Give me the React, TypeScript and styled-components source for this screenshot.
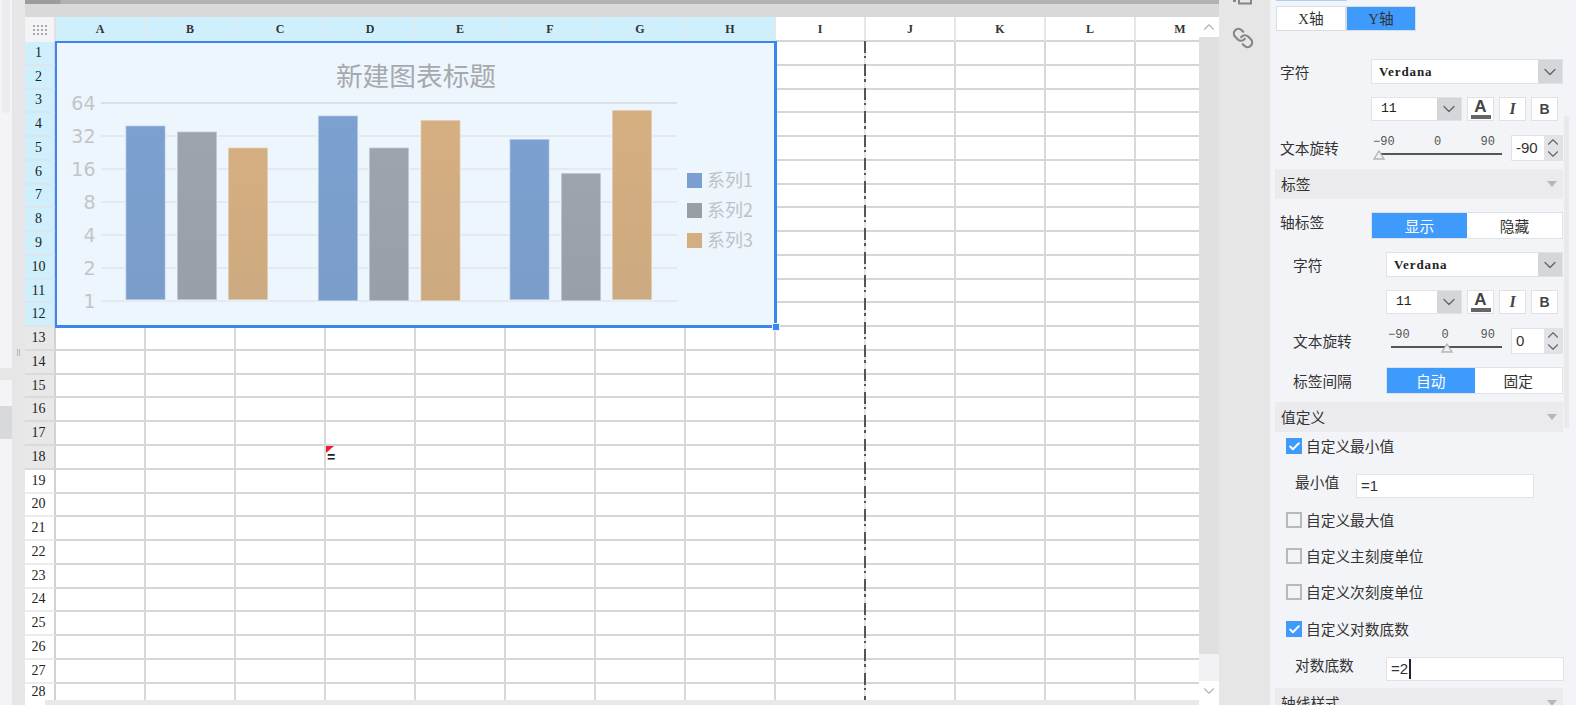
import styled, { createGlobalStyle } from "styled-components";
import { Check, ChevronDown, ChevronUp, Link } from "lucide-react";

const GlobalStyle = createGlobalStyle`
  html, body {
    margin: 0;
    padding: 0;
    background: #f3f4f7;
  }
  * {
    box-sizing: border-box;
  }
`

const CJK = `"Noto Sans CJK SC", "Noto Sans", sans-serif`
const SERIF = `"Liberation Serif", "Noto Sans CJK SC", serif`
const MONO = `"Liberation Mono", "Noto Sans CJK SC", monospace`
const BLUE = "#3f9bfb"

const Page = styled.div`
  display: flex;
  width: 1576px;
  height: 705px;
  overflow: hidden;
  font-family: ${CJK};
  color: #333;
`

/* left edge of the window */
const LeftRail = styled.div`
  display: flex;
  flex: 0 0 25px;
`

const RailList = styled.div`
  display: flex;
  flex-direction: column;
  width: 12px;
  background: #f4f4f6;
`

const RailThumb = styled.div`
  width: 8px;
  height: 113px;
  margin-left: 2px;
  border-radius: 0 0 4px 4px;
  background: #ececee;
`

const RailBar = styled.div<{ $mt: number; $h: number; $bg: string }>`
  margin-top: ${p => p.$mt}px;
  height: ${p => p.$h}px;
  background: ${p => p.$bg};
`

const Sash = styled.div`
  display: flex;
  align-items: center;
  justify-content: center;
  gap: 1px;
  width: 13px;
  background: #e6e6e6;
`

const SashDot = styled.span`
  width: 1px;
  height: 7px;
  background: #b8b8b8;
`

/* sheet */
const SheetArea = styled.div`
  display: flex;
  flex-direction: column;
  flex: 0 0 1194px;
  min-width: 0;
`

const TopBar = styled.div`
  flex: 0 0 4px;
  background: linear-gradient(90deg, #9c9c9c 0, #9c9c9c 35px, #b2b2b2 36px);
`

const TopGap = styled.div`
  flex: 0 0 13px;
  background: #d9d9da;
`

const SheetBody = styled.div`
  display: flex;
  flex: 1;
  min-height: 0;
`

const GridWrap = styled.div`
  position: relative;
  width: 1174px;
  overflow: hidden;
  background: #fff;
`

const Grid = styled.div`
  display: grid;
  grid-template-columns: 31px repeat(13, 90px);
  grid-template-rows: 25px repeat(28, 23.77px);
`

const Corner = styled.div`
  display: flex;
  align-items: center;
  justify-content: center;
  background: #f4f4f6;
  border-right: 2px solid #e2e2e2;
`

const ColHead = styled.div<{ $active: boolean }>`
  display: flex;
  align-items: center;
  justify-content: center;
  padding-top: 2px;
  font-family: ${SERIF};
  font-size: 12px;
  font-weight: 700;
  color: #333;
  background: ${p => (p.$active ? "#cfeffc" : "#fff")};
  border-right: 2px solid ${p => (p.$active ? "#dce9ef" : "#e6e6e6")};
  border-bottom: 2px solid ${p => (p.$active ? "#cfeffc" : "#d6d6d6")};
`

const RowHead = styled.div<{ $tone: "blue" | "grey" | "plain"; $clipped?: boolean }>`
  display: flex;
  align-items: center;
  justify-content: center;
  padding: 0 2px ${p => (p.$clipped ? 6 : 0)}px 0;
  font-family: ${SERIF};
  font-size: 14px;
  line-height: 14px;
  color: #222;
  background: ${p => (p.$tone === "blue" ? "#cfeffc" : p.$tone === "grey" ? "#e8e8e8" : "#fff")};
  border-right: 2px solid #d2d2d2;
  border-bottom: 2px solid ${p => (p.$tone === "blue" ? "#dce6ea" : p.$tone === "grey" ? "#dadada" : "#ececec")};
`

const Cell = styled.div`
  position: relative;
  border-right: 2px solid #d8d8d8;
  border-bottom: 2px solid #d6d6d6;
`

const NoteMark = styled.span`
  position: absolute;
  top: 0;
  left: 0;
  width: 8px;
  height: 7px;
  background: #f5143c;
  clip-path: polygon(0 0, 100% 0, 0 100%);
`

const CellText = styled.span`
  position: absolute;
  top: 4px;
  left: 1px;
  font-family: ${MONO};
  font-size: 14px;
  font-weight: 700;
  color: #222;
`

const PageBreak = styled.div`
  position: absolute;
  top: 24px;
  bottom: 0;
  left: 839px;
  width: 2px;
  background: repeating-linear-gradient(
    180deg,
    #555 0,
    #555 12px,
    #e4e4e4 12px,
    #e4e4e4 15px,
    #555 15px,
    #555 17.5px,
    #e4e4e4 17.5px,
    #e4e4e4 23.4px
  );
`

const ChartFrame = styled.div`
  position: absolute;
  top: 24px;
  left: 30px;
  width: 722px;
  height: 287px;
  background: #edf5fd;
  border: solid #3a86f0;
  border-width: 2px 3px 3px 2px;
`

const Handle = styled.span`
  position: absolute;
  right: -6px;
  bottom: -6px;
  width: 8px;
  height: 8px;
  background: #3a86f0;
  border: 1px solid #e8f1fc;
`

const VScroll = styled.div`
  display: flex;
  flex-direction: column;
  flex: 0 0 20px;
  background: #f2f2f4;
`

const ScrollBtn = styled.div<{ $h: number }>`
  display: flex;
  align-items: center;
  justify-content: center;
  flex: 0 0 ${p => p.$h}px;
  background: #fff;
  color: #b4b4b4;
`

const VTrack = styled.div`
  flex: 0 0 617px;
  background: #e0e0e0;
`

const VGap = styled.div`
  flex: 1;
`

const HScroll = styled.div`
  display: flex;
  flex: 0 0 5px;
  background: #e9e9e9;
`

const HEnd = styled.div<{ $w: number }>`
  flex: 0 0 ${p => p.$w}px;
  background: #fff;
`

const HTrack = styled.div`
  flex: 1;
`

/* icons between sheet and panel */
const IconRail = styled.div`
  display: flex;
  flex-direction: column;
  align-items: center;
  gap: 22px;
  flex: 0 0 51px;
  padding-right: 4px;
  background: #e6e6e6;
  color: #868686;
`

const FlippedLink = styled(Link)`
  transform: scaleX(-1);
`

/* property panel */
const Panel = styled.div`
  position: relative;
  display: flex;
  flex-direction: column;
  flex: 0 0 306px;
  padding-right: 13px;
  overflow: hidden;
  background: #f3f4f7;
  font-size: 14.7px;
  line-height: 18px;
`

const PanelThumb = styled.div`
  position: absolute;
  top: 116px;
  right: 7px;
  width: 5px;
  height: 312px;
  border-radius: 3px;
  background: #e9e9eb;
`

const TabLine = styled.div`
  flex: 0 0 1px;
  width: 71px;
  margin: 0 0 5px 6px;
  background: #a5cff9;
`

const AxisTabs = styled.div`
  display: flex;
  flex: 0 0 25px;
  width: 140px;
  margin-left: 6px;
`

const AxisTab = styled.div<{ $active?: boolean }>`
  flex: 1;
  display: flex;
  align-items: center;
  justify-content: center;
  font-family: ${SERIF};
  font-size: 14.7px;
  color: #333;
  background: ${p => (p.$active ? BLUE : "#fff")};
  border: 1px solid #d9dde4;
`

const Row = styled.div<{ $mt: number; $h: number; $indent?: boolean }>`
  display: flex;
  align-items: center;
  flex: 0 0 ${p => p.$h}px;
  min-height: 0;
  margin-top: ${p => p.$mt}px;
  padding-left: ${p => (p.$indent ? 23 : 10)}px;
`

const Label = styled.div<{ $indent?: boolean; $lift?: boolean }>`
  flex: 0 0 ${p => (p.$indent ? 93 : 91)}px;
  padding-bottom: ${p => (p.$lift ? 8 : 0)}px;
  white-space: nowrap;
`

const Select = styled.div<{ $w?: number }>`
  display: flex;
  ${p => (p.$w ? `flex: 0 0 ${p.$w}px;` : "flex: 1;")}
  height: 100%;
  background: #fff;
  border: 1px solid #e0e2e7;
`

const SelectText = styled.div`
  flex: 1;
  display: flex;
  align-items: center;
  padding-left: 9px;
  font-family: ${MONO};
  font-size: 13px;
  color: #222;
`

const FontName = styled(SelectText)`
  padding-left: 7px;
  font-family: ${SERIF};
  font-weight: 700;
  letter-spacing: 0.9px;
`

const SelectArrow = styled.div`
  display: flex;
  align-items: center;
  justify-content: center;
  flex: 0 0 24px;
  background: #d5d6da;
  color: #666;
`

const FontBtn = styled.div<{ $ml: number }>`
  display: flex;
  flex-direction: column;
  align-items: center;
  justify-content: center;
  flex: 0 0 27px;
  height: 100%;
  margin-left: ${p => p.$ml}px;
  background: #fff;
  border: 1px solid #dfe1e6;
  color: #444;
`

const ColorA = styled.span`
  font-family: "Liberation Sans", sans-serif;
  font-size: 17px;
  font-weight: 700;
  line-height: 15px;
`

const ColorBar = styled.span`
  width: 20px;
  height: 4px;
  margin-top: 1px;
  background: #666;
`

const ItalicI = styled.span`
  font-family: "Liberation Serif", serif;
  font-size: 16px;
  font-weight: 700;
  font-style: italic;
`

const BoldB = styled.span`
  font-family: "Liberation Sans", sans-serif;
  font-size: 14px;
  font-weight: 700;
`

const Slider = styled.div<{ $w: number }>`
  position: relative;
  flex: 0 0 ${p => p.$w}px;
  height: 100%;
  margin-left: 2px;
`

const Ticks = styled.div`
  display: flex;
  justify-content: space-between;
  padding-right: 7px;
  font-family: ${MONO};
  font-size: 12px;
  line-height: 14px;
  color: #555;
`

const Track = styled.div<{ $inset: number }>`
  position: absolute;
  top: 18px;
  right: 0;
  left: ${p => p.$inset}px;
  height: 2px;
  background: #555;
`

const Thumb = styled.svg<{ $left: number }>`
  position: absolute;
  top: 15px;
  left: ${p => p.$left}px;
`

const SpinInput = styled.div`
  display: flex;
  flex: 0 0 52px;
  height: 100%;
  margin-left: 9px;
  background: #fff;
  border: 1px solid #e0e2e7;
  font-family: "Liberation Sans", sans-serif;
  font-size: 15px;
`

const SpinValue = styled.div`
  flex: 1;
  display: flex;
  align-items: center;
  padding-left: 4px;
  color: #333;
`

const Spinner = styled.div`
  display: flex;
  flex-direction: column;
  align-items: center;
  justify-content: center;
  flex: 0 0 15px;
  background: #e2e3e7;
  color: #666;
`

const SpinUp = styled(ChevronUp)`
  margin: -3px 0;
`

const SpinDown = styled(ChevronDown)`
  margin: -3px 0;
`

const Toggle = styled.div`
  display: flex;
  flex: 1;
  height: 100%;
  background: #fff;
  border: 1px solid #dfe2e8;
`

const ToggleItem = styled.div<{ $active?: boolean }>`
  flex: 1;
  display: flex;
  align-items: center;
  justify-content: center;
  background: ${p => (p.$active ? BLUE : "#fff")};
  color: ${p => (p.$active ? "#fff" : "#333")};
`

const Section = styled.div<{ $mt: number }>`
  display: flex;
  align-items: center;
  justify-content: space-between;
  flex: 0 0 30px;
  margin: ${p => p.$mt}px 0 0 5px;
  padding: 0 6px;
  background: #ebebed;
`

const SectionArrow = styled.span`
  width: 10px;
  height: 6px;
  background: #b6b6b6;
  clip-path: polygon(0 0, 100% 0, 50% 100%);
`

const CheckRow = styled.div<{ $mt: number }>`
  display: flex;
  align-items: center;
  gap: 4px;
  flex: 0 0 18px;
  margin-top: ${p => p.$mt}px;
  padding-left: 16px;
`

const Box = styled.span<{ $checked?: boolean }>`
  display: flex;
  align-items: center;
  justify-content: center;
  width: 16px;
  height: 16px;
  background: ${p => (p.$checked ? BLUE : "transparent")};
  border: ${p => (p.$checked ? "none" : "2px solid #b8b8b8")};
  color: #fff;
`

const TextField = styled.div`
  display: flex;
  align-items: center;
  flex: 0 0 178px;
  height: 100%;
  padding-left: 4px;
  background: #fff;
  border: 1px solid #e0e2e7;
  font-family: "Liberation Sans", sans-serif;
  font-size: 15px;
  color: #333;
`

const Caret = styled.span`
  width: 1.5px;
  height: 20px;
  margin-left: 1px;
  background: #223;
`

const FieldLabel = styled.div<{ $w: number }>`
  flex: 0 0 ${p => p.$w}px;
  padding: 0 0 8px 15px;
  white-space: nowrap;
`

const COLUMNS = ["A", "B", "C", "D", "E", "F", "G", "H", "I", "J", "K", "L", "M"]
const ROWS = Array.from({ length: 28 }, (_, i) => i + 1)

const GRID_LINES = [
  { label: "64", y: 103 },
  { label: "32", y: 136 },
  { label: "16", y: 169 },
  { label: "8", y: 202 },
  { label: "4", y: 235 },
  { label: "2", y: 268 },
  { label: "1", y: 301 },
]

const BARS = [
  { x: 125.5, top: 125.5, bottom: 300, fill: "url(#blueBar)" },
  { x: 177, top: 131.5, bottom: 300, fill: "url(#greyBar)" },
  { x: 228, top: 147.5, bottom: 300, fill: "url(#tanBar)" },
  { x: 318, top: 115.5, bottom: 301, fill: "url(#blueBar)" },
  { x: 369, top: 147.5, bottom: 301, fill: "url(#greyBar)" },
  { x: 420.5, top: 120, bottom: 301, fill: "url(#tanBar)" },
  { x: 509.5, top: 139, bottom: 300, fill: "url(#blueBar)" },
  { x: 561, top: 173, bottom: 301, fill: "url(#greyBar)" },
  { x: 612, top: 110, bottom: 300, fill: "url(#tanBar)" },
]

const LEGEND = [
  { label: "系列1", y: 173, fill: "#7b9fce" },
  { label: "系列2", y: 203, fill: "#9a9fa6" },
  { label: "系列3", y: 233, fill: "#d3ae80" },
]

function Chart() {
  // viewBox uses the page coordinates of the chart's inner box
  return (
    <svg width="717" height="282" viewBox="57 43 717 282">
      <defs>
        <linearGradient id="blueBar" x1="0" y1="0" x2="0" y2="1">
          <stop offset="0" stopColor="#7ca0d0" />
          <stop offset="1" stopColor="#7a9dca" />
        </linearGradient>
        <linearGradient id="greyBar" x1="0" y1="0" x2="0" y2="1">
          <stop offset="0" stopColor="#9da4ab" />
          <stop offset="1" stopColor="#999fa6" />
        </linearGradient>
        <linearGradient id="tanBar" x1="0" y1="0" x2="0" y2="1">
          <stop offset="0" stopColor="#d6af81" />
          <stop offset="1" stopColor="#cca97f" />
        </linearGradient>
      </defs>
      <text x="416" y="86" textAnchor="middle" fontFamily={CJK} fontSize="26.7" fill="#a6a9ad">
        新建图表标题
      </text>
      {GRID_LINES.map(line => (
        <g key={line.label}>
          <line x1="101" x2="677" y1={line.y} y2={line.y} stroke={line.label === "64" ? "#d3d9e0" : "#e0e5ec"} strokeWidth="1.5" />
          <text x="95.5" y={line.y + 7} textAnchor="end" fontFamily="DejaVu Sans, sans-serif" fontSize="19" fill="#c2c5c9">
            {line.label}
          </text>
        </g>
      ))}
      {BARS.map(bar => (
        <rect
          key={bar.x}
          x={bar.x}
          y={bar.top}
          width="40"
          height={bar.bottom - bar.top}
          fill={bar.fill}
          stroke="#edf5fd"
          strokeOpacity="0.6"
          strokeWidth="1.5"
        />
      ))}
      {LEGEND.map(item => (
        <g key={item.label}>
          <rect x="687" y={item.y} width="15" height="15" fill={item.fill} />
          <text x="707" y={item.y + 14} fontFamily={CJK} fontSize="18" fill="#bec2c6">
            {item.label}
          </text>
        </g>
      ))}
    </svg>
  );
}

function Sheet() {
  return (
    <GridWrap>
      <Grid>
        <Corner>
          <svg width="14" height="10" viewBox="0 0 14 10" fill="#a8a8a8">
            {[0, 4, 8].flatMap(y =>
              [0, 4, 8, 12].map(x => <rect key={`${x}-${y}`} x={x} y={y} width="2" height="2" />)
            )}
          </svg>
        </Corner>
        {COLUMNS.map((col, i) => (
          <ColHead key={col} $active={i < 8}>{col}</ColHead>
        ))}
        {ROWS.map(row => [
          <RowHead
            key={`head-${row}`}
            $tone={row <= 12 ? "blue" : row <= 18 ? "grey" : "plain"}
            $clipped={row === 28}
          >
            {row}
          </RowHead>,
          ...COLUMNS.map(col => (
            <Cell key={`${col}${row}`}>
              {col === "D" && row === 18 && (
                <>
                  <NoteMark />
                  <CellText>=</CellText>
                </>
              )}
            </Cell>
          )),
        ])}
      </Grid>
      <PageBreak />
      <ChartFrame>
        <Chart />
        <Handle />
      </ChartFrame>
    </GridWrap>
  );
}

function FontRow({ mt, indent }: { mt: number; indent?: boolean }) {
  return (
    <Row $mt={mt} $h={24} $indent={indent}>
      <Label $indent={indent} />
      <Select $w={indent ? 76 : 91}>
        <SelectText>11</SelectText>
        <SelectArrow><ChevronDown size={20} strokeWidth={1.6} /></SelectArrow>
      </Select>
      <FontBtn $ml={5}>
        <ColorA>A</ColorA>
        <ColorBar />
      </FontBtn>
      <FontBtn $ml={5}><ItalicI>I</ItalicI></FontBtn>
      <FontBtn $ml={5}><BoldB>B</BoldB></FontBtn>
    </Row>
  );
}

function RotationRow({ mt, indent, value, thumb }: { mt: number; indent?: boolean; value: string; thumb: number }) {
  return (
    <Row $mt={mt} $h={26} $indent={indent}>
      <Label $indent={indent}>文本旋转</Label>
      <Slider $w={indent ? 114 : 129}>
        <Ticks>
          <span>−90</span>
          <span>0</span>
          <span>90</span>
        </Ticks>
        <Track $inset={indent ? 3 : 5} />
        <Thumb $left={thumb} width="12" height="10" viewBox="0 0 12 10">
          <path d="M6 1 L11 9 L1 9 Z" fill="#eef0f3" stroke="#b4b4b4" strokeWidth="1.3" />
        </Thumb>
      </Slider>
      <SpinInput>
        <SpinValue>{value}</SpinValue>
        <Spinner>
          <SpinUp size={18} strokeWidth={1.5} />
          <SpinDown size={18} strokeWidth={1.5} />
        </Spinner>
      </SpinInput>
    </Row>
  );
}

function FontSelect({ mt, indent }: { mt: number; indent?: boolean }) {
  return (
    <Row $mt={mt} $h={25} $indent={indent}>
      <Label $indent={indent}>字符</Label>
      <Select>
        <FontName>Verdana</FontName>
        <SelectArrow><ChevronDown size={20} strokeWidth={1.6} /></SelectArrow>
      </Select>
    </Row>
  );
}

function CheckItem({ mt, checked, children }: { mt: number; checked?: boolean; children: string }) {
  return (
    <CheckRow $mt={mt}>
      <Box $checked={checked}>{checked && <Check size={13} strokeWidth={3.5} />}</Box>
      {children}
    </CheckRow>
  );
}

function PropertyPanel() {
  return (
    <Panel>
      <TabLine />
      <AxisTabs>
        <AxisTab>X轴</AxisTab>
        <AxisTab $active>Y轴</AxisTab>
      </AxisTabs>
      <FontSelect mt={28} />
      <FontRow mt={13} />
      <RotationRow mt={14} value="-90" thumb={0} />
      <Section $mt={8}>标签<SectionArrow /></Section>
      <Row $mt={13} $h={27}>
        <Label $lift>轴标签</Label>
        <Toggle>
          <ToggleItem $active>显示</ToggleItem>
          <ToggleItem>隐藏</ToggleItem>
        </Toggle>
      </Row>
      <FontSelect mt={13} indent />
      <FontRow mt={13} indent />
      <RotationRow mt={14} indent value="0" thumb={53} />
      <Row $mt={13} $h={27} $indent>
        <Label $indent>标签间隔</Label>
        <Toggle>
          <ToggleItem $active>自动</ToggleItem>
          <ToggleItem>固定</ToggleItem>
        </Toggle>
      </Row>
      <Section $mt={8}>值定义<SectionArrow /></Section>
      <CheckItem mt={5} checked>自定义最小值</CheckItem>
      <Row $mt={19} $h={24}>
        <FieldLabel $w={76}>最小值</FieldLabel>
        <TextField>=1</TextField>
      </Row>
      <CheckItem mt={13}>自定义最大值</CheckItem>
      <CheckItem mt={18}>自定义主刻度单位</CheckItem>
      <CheckItem mt={18}>自定义次刻度单位</CheckItem>
      <CheckItem mt={19}  checked>自定义对数底数</CheckItem>
      <Row $mt={19} $h={24}>
        <FieldLabel $w={106}>对数底数</FieldLabel>
        <TextField>=2<Caret /></TextField>
      </Row>
      <Section $mt={7}>轴线样式<SectionArrow /></Section>
      <PanelThumb />
    </Panel>
  );
}

function App() {
  return (
    <>
      <GlobalStyle />
      <Page>
        <LeftRail>
          <RailList>
            <RailThumb />
            <RailBar $mt={255} $h={12} $bg="#e6e6e6" />
            <RailBar $mt={26} $h={33} $bg="#d8d9dc" />
          </RailList>
          <Sash>
            <SashDot />
            <SashDot />
          </Sash>
        </LeftRail>
        <SheetArea>
          <TopBar />
          <TopGap />
          <SheetBody>
            <Sheet />
            <VScroll>
              <ScrollBtn $h={20}><ChevronUp size={18} strokeWidth={1.5} /></ScrollBtn>
              <VTrack />
              <VGap />
              <ScrollBtn $h={19}><ChevronDown size={18} strokeWidth={1.5} /></ScrollBtn>
            </VScroll>
          </SheetBody>
          <HScroll>
            <HEnd $w={20} />
            <HTrack />
            <HEnd $w={20} />
          </HScroll>
        </SheetArea>
        <IconRail>
          <svg width="20" height="5" viewBox="0 0 20 5" fill="none" stroke="currentColor" strokeWidth="2">
            <path d="M6 -2 V3.5 H18 V-2" />
            <path d="M0 1 H3" />
          </svg>
          <FlippedLink size={22} strokeWidth={2.4} />
        </IconRail>
        <PropertyPanel />
      </Page>
    </>
  );
}

export default App;
